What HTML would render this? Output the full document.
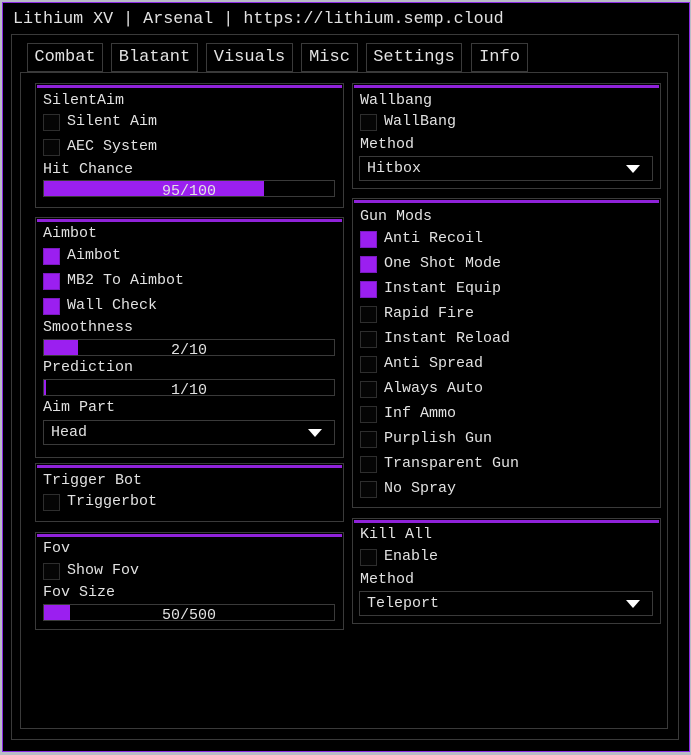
<!DOCTYPE html>
<html><head><style>
*{margin:0;padding:0;box-sizing:border-box}
body{width:691px;height:755px;background:#b9bdc6;position:relative;overflow:hidden;font-family:"Liberation Mono",monospace;color:#e2e2e2;font-size:15px}
div{position:absolute}
.win{left:2px;top:2px;width:688px;height:750px;background:#000;border:1px solid #8a2be2}
.fr{border:1px solid #3a3a3a}
.t{white-space:nowrap;line-height:18px}
.tab{border:1px solid #3a3a3a;height:29px;font-size:17px;line-height:27px;text-align:center;background:#000}
.p{border:1px solid #3a3a3a}
.bar{height:3px;background:#8f22d9;left:1px;right:1px;top:1px}
.cb{width:17px;height:17px;border:1px solid #2e2e2e;background:#050505}
.on{background:#9b1ff0;border-color:#7a1ac0}
.sl{height:17px;border:1px solid #3a3a3a}
.sl .f{left:0;top:0;bottom:0;background:#9b1ff0}
.sl .v{left:0;right:0;top:2px;text-align:center;line-height:17px;font-size:15px}
.dd{height:25px;border:1px solid #3a3a3a}
.dd .v{left:7px;top:3px}
.tri{right:12px;top:8px;width:0;height:0;border-left:7px solid transparent;border-right:7px solid transparent;border-top:8px solid #fff}
</style></head><body>
<div class="win"></div>
<div class="t" style="left:13px;top:11px;font-size:16.7px">Lithium XV | Arsenal | https://lithium.semp.cloud</div>
<div class="fr" style="left:11px;top:34px;width:668px;height:706px"></div>
<div class="fr" style="left:20px;top:72px;width:648px;height:657px"></div>
<div class="tab" style="left:27px;top:43px;width:76px">Combat</div>
<div class="tab" style="left:111px;top:43px;width:87px">Blatant</div>
<div class="tab" style="left:206px;top:43px;width:87px">Visuals</div>
<div class="tab" style="left:301px;top:43px;width:57px">Misc</div>
<div class="tab" style="left:366px;top:43px;width:96px">Settings</div>
<div class="tab" style="left:471px;top:43px;width:57px">Info</div>

<!-- SilentAim -->
<div class="p" style="left:35px;top:83px;width:309px;height:125px"><div class="bar"></div></div>
<div class="t" style="left:43px;top:92px">SilentAim</div>
<div class="cb" style="left:43px;top:114px"></div><div class="t" style="left:67px;top:113px">Silent Aim</div>
<div class="cb" style="left:43px;top:139px"></div><div class="t" style="left:67px;top:138px">AEC System</div>
<div class="t" style="left:43px;top:161px">Hit Chance</div>
<div class="sl" style="left:43px;top:180px;width:292px"><div class="f" style="width:220px"></div><div class="v">95/100</div></div>

<!-- Aimbot -->
<div class="p" style="left:35px;top:217px;width:309px;height:241px"><div class="bar"></div></div>
<div class="t" style="left:43px;top:225px">Aimbot</div>
<div class="cb on" style="left:43px;top:248px"></div><div class="t" style="left:67px;top:247px">Aimbot</div>
<div class="cb on" style="left:43px;top:273px"></div><div class="t" style="left:67px;top:272px">MB2 To Aimbot</div>
<div class="cb on" style="left:43px;top:298px"></div><div class="t" style="left:67px;top:297px">Wall Check</div>
<div class="t" style="left:43px;top:319px">Smoothness</div>
<div class="sl" style="left:43px;top:339px;width:292px"><div class="f" style="width:34px"></div><div class="v">2/10</div></div>
<div class="t" style="left:43px;top:359px">Prediction</div>
<div class="sl" style="left:43px;top:379px;width:292px"><div class="f" style="width:2px"></div><div class="v">1/10</div></div>
<div class="t" style="left:43px;top:399px">Aim Part</div>
<div class="dd" style="left:43px;top:420px;width:292px"><div class="t v">Head</div><div class="tri"></div></div>

<!-- Trigger -->
<div class="p" style="left:35px;top:463px;width:309px;height:59px"><div class="bar"></div></div>
<div class="t" style="left:43px;top:472px">Trigger Bot</div>
<div class="cb" style="left:43px;top:494px"></div><div class="t" style="left:67px;top:493px">Triggerbot</div>

<!-- Fov -->
<div class="p" style="left:35px;top:532px;width:309px;height:98px"><div class="bar"></div></div>
<div class="t" style="left:43px;top:540px">Fov</div>
<div class="cb" style="left:43px;top:563px"></div><div class="t" style="left:67px;top:562px">Show Fov</div>
<div class="t" style="left:43px;top:584px">Fov Size</div>
<div class="sl" style="left:43px;top:604px;width:292px"><div class="f" style="width:26px"></div><div class="v">50/500</div></div>

<!-- Wallbang -->
<div class="p" style="left:352px;top:83px;width:309px;height:106px"><div class="bar"></div></div>
<div class="t" style="left:360px;top:92px">Wallbang</div>
<div class="cb" style="left:360px;top:114px"></div><div class="t" style="left:384px;top:113px">WallBang</div>
<div class="t" style="left:360px;top:136px">Method</div>
<div class="dd" style="left:359px;top:156px;width:294px"><div class="t v">Hitbox</div><div class="tri"></div></div>

<!-- Gun Mods -->
<div class="p" style="left:352px;top:198px;width:309px;height:310px"><div class="bar"></div></div>
<div class="t" style="left:360px;top:208px">Gun Mods</div>
<div class="cb on" style="left:360px;top:231px"></div><div class="t" style="left:384px;top:230px">Anti Recoil</div>
<div class="cb on" style="left:360px;top:256px"></div><div class="t" style="left:384px;top:255px">One Shot Mode</div>
<div class="cb on" style="left:360px;top:281px"></div><div class="t" style="left:384px;top:280px">Instant Equip</div>
<div class="cb" style="left:360px;top:306px"></div><div class="t" style="left:384px;top:305px">Rapid Fire</div>
<div class="cb" style="left:360px;top:331px"></div><div class="t" style="left:384px;top:330px">Instant Reload</div>
<div class="cb" style="left:360px;top:356px"></div><div class="t" style="left:384px;top:355px">Anti Spread</div>
<div class="cb" style="left:360px;top:381px"></div><div class="t" style="left:384px;top:380px">Always Auto</div>
<div class="cb" style="left:360px;top:406px"></div><div class="t" style="left:384px;top:405px">Inf Ammo</div>
<div class="cb" style="left:360px;top:431px"></div><div class="t" style="left:384px;top:430px">Purplish Gun</div>
<div class="cb" style="left:360px;top:456px"></div><div class="t" style="left:384px;top:455px">Transparent Gun</div>
<div class="cb" style="left:360px;top:481px"></div><div class="t" style="left:384px;top:480px">No Spray</div>

<!-- Kill All -->
<div class="p" style="left:352px;top:518px;width:309px;height:106px"><div class="bar"></div></div>
<div class="t" style="left:360px;top:526px">Kill All</div>
<div class="cb" style="left:360px;top:549px"></div><div class="t" style="left:384px;top:548px">Enable</div>
<div class="t" style="left:360px;top:571px">Method</div>
<div class="dd" style="left:359px;top:591px;width:294px"><div class="t v">Teleport</div><div class="tri"></div></div>
</body></html>
